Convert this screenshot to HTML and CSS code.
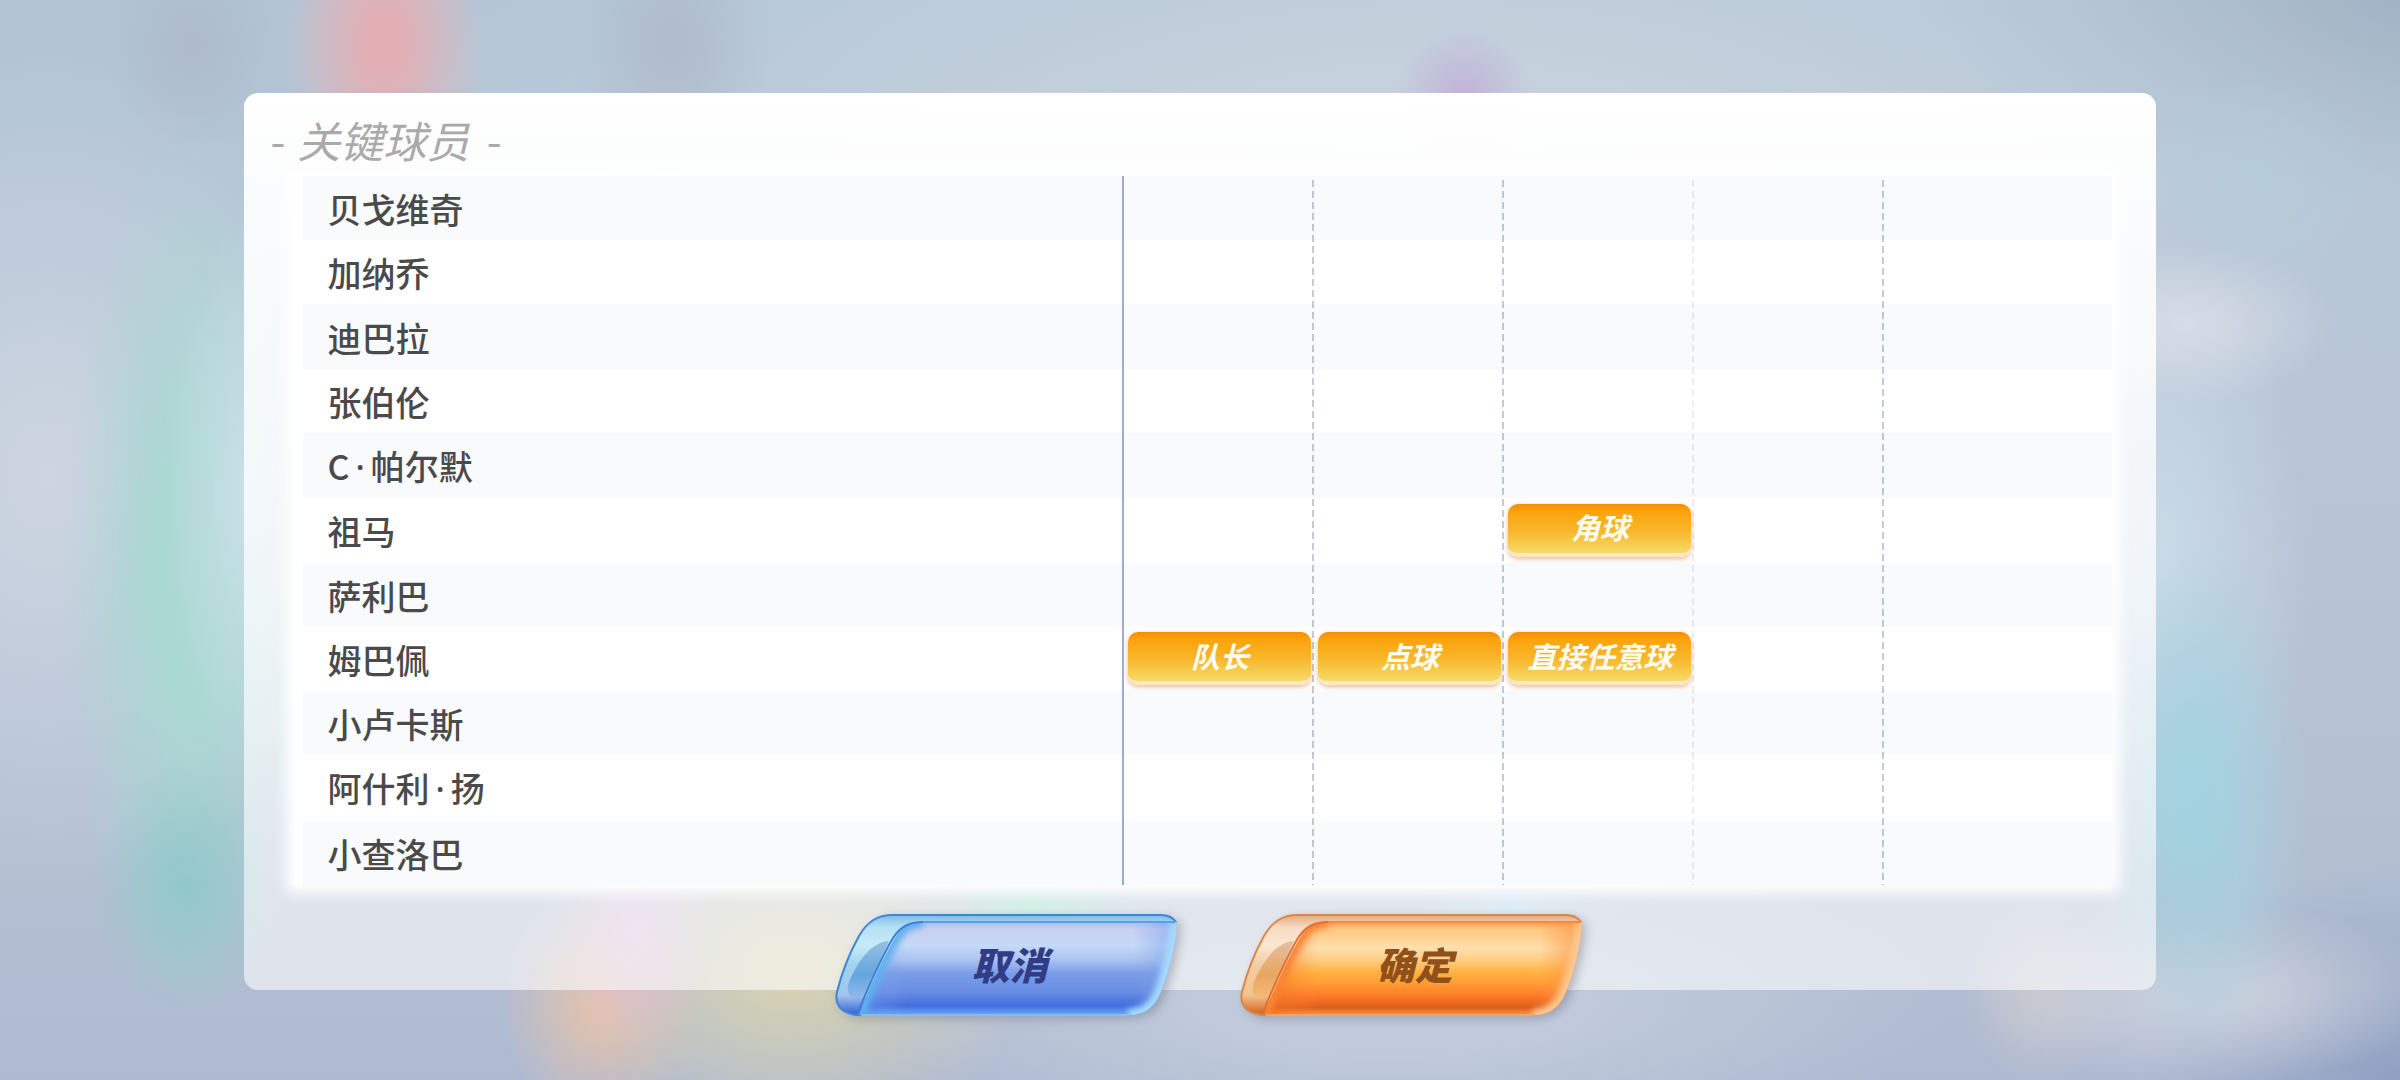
FILE: index.html
```
<!DOCTYPE html>
<html lang="zh-CN">
<head>
  <meta charset="UTF-8">
  <title>关键球员</title>
  <link rel="stylesheet" href="styles.css">
</head>
<body>
  <main class="panel">
    <h1 class="title">- <em>关键球员</em> -</h1>

    <div class="sheet">
      <table class="players">
        <colgroup>
          <col>
          <col class="role first">
          <col class="role">
          <col class="role">
          <col class="role faint">
          <col class="rest">
        </colgroup>
        <tbody>
          <tr><th scope="row">贝戈维奇</th><td></td><td></td><td></td><td></td><td></td></tr>
          <tr><th scope="row">加纳乔</th><td></td><td></td><td></td><td></td><td></td></tr>
          <tr><th scope="row">迪巴拉</th><td></td><td></td><td></td><td></td><td></td></tr>
          <tr><th scope="row">张伯伦</th><td></td><td></td><td></td><td></td><td></td></tr>
          <tr><th scope="row">C<span class="dot">·</span>帕尔默</th><td></td><td></td><td></td><td></td><td></td></tr>
          <tr><th scope="row">祖马</th><td></td><td></td><td><button class="tag">角球</button></td><td></td><td></td></tr>
          <tr><th scope="row">萨利巴</th><td></td><td></td><td></td><td></td><td></td></tr>
          <tr><th scope="row">姆巴佩</th><td><button class="tag">队长</button></td><td><button class="tag">点球</button></td><td><button class="tag">直接任意球</button></td><td></td><td></td></tr>
          <tr><th scope="row">小卢卡斯</th><td></td><td></td><td></td><td></td><td></td></tr>
          <tr><th scope="row">阿什利<span class="dot">·</span>扬</th><td></td><td></td><td></td><td></td><td></td></tr>
          <tr><th scope="row">小查洛巴</th><td></td><td></td><td></td><td></td><td></td></tr>
        </tbody>
      </table>
    </div>

    <div class="actions">
      <button class="btn cancel">
        <svg viewBox="0 0 344 104" aria-hidden="true">
          <defs>
            <linearGradient id="blueGlass" x1="0" y1="0" x2="0" y2="1">
              <stop offset="0" stop-color="#7cbcea"/>
              <stop offset=".12" stop-color="#b4e0f6"/>
              <stop offset=".3" stop-color="#c8ebf8"/>
              <stop offset=".5" stop-color="#9fd4f0"/>
              <stop offset=".8" stop-color="#a4c4ee"/>
              <stop offset="1" stop-color="#2c62d4"/>
            </linearGradient>
            <linearGradient id="blueCore" x1="0" y1="0" x2="0" y2="1">
              <stop offset="0" stop-color="#8fb4da"/>
              <stop offset=".6" stop-color="#549cdc"/>
              <stop offset="1" stop-color="#8fb8ea"/>
            </linearGradient>
            <linearGradient id="blueFace" x1="0" y1="0" x2="0" y2="1">
              <stop offset="0" stop-color="#a4c4f2"/>
              <stop offset=".08" stop-color="#cccff0"/>
              <stop offset=".25" stop-color="#c4daf7"/>
              <stop offset=".4" stop-color="#adc5f2"/>
              <stop offset=".55" stop-color="#7b9de7"/>
              <stop offset=".75" stop-color="#688de4"/>
              <stop offset=".9" stop-color="#436ddf"/>
              <stop offset="1" stop-color="#6ba6f4"/>
            </linearGradient>
            <linearGradient id="blueShine" x1="0" y1="0" x2="1" y2="0">
              <stop offset="0" stop-color="#5a8be8" stop-opacity=".6"/>
              <stop offset=".16" stop-color="#8fb2f0" stop-opacity="0"/>
              <stop offset=".86" stop-color="#7fa0ea" stop-opacity="0"/>
              <stop offset="1" stop-color="#7fa6ee" stop-opacity=".7"/>
            </linearGradient>
            <clipPath id="faceClip">
              <path d="M88 8 H342 C341 30 334 58 326 78 C320 93 310 101 294 101 H24 C32 80 48 44 60 24 C68 12 76 8 88 8 Z"/>
            </clipPath>
            <filter id="soft" x="-20%" y="-20%" width="140%" height="140%">
              <feGaussianBlur stdDeviation="3"/>
            </filter>
          </defs>
          <path d="M58 1 H326 Q336 1 341 8 L300 60 L26 101 C8 101 -1 92 2 78 C7 58 14 40 24 22 C32 8 42 1 58 1 Z" fill="url(#blueGlass)" stroke="#3d86d8" stroke-width="2"/>
          <path d="M54 27 C38 28 24 44 14 68 C9 82 20 88 28 82 Z" fill="url(#blueCore)" opacity=".8"/>
          <path d="M88 8 H342 C341 30 334 58 326 78 C320 93 310 101 294 101 H24 C32 80 48 44 60 24 C68 12 76 8 88 8 Z" fill="url(#blueFace)"/>
          <g clip-path="url(#faceClip)">
            <path d="M20 0 H344 V104 H20 Z" fill="url(#blueShine)"/>
            <path d="M341 8 C340 30 333 58 325 78 C319 93 309 101 293 101" fill="none" stroke="#a6dcff" stroke-width="12" filter="url(#soft)"/>
            <path d="M24 101 C32 80 48 44 60 24 C68 12 76 8 88 8" fill="none" stroke="#62b0f0" stroke-width="12" filter="url(#soft)"/>
          </g>
          <path d="M22 101 C30 80 46 44 58 24 C66 12 75 8 88 8" fill="none" stroke="#3a80d8" stroke-width="2"/>
          <path d="M88 8 H340" fill="none" stroke="#5f9de6" stroke-width="2"/>
          <path d="M26 101 H294" fill="none" stroke="#7fbdf8" stroke-width="2"/>
        </svg>
        <span>取消</span>
      </button>

      <button class="btn confirm">
        <svg viewBox="0 0 344 104" aria-hidden="true">
          <defs>
            <linearGradient id="orangeGlass" x1="0" y1="0" x2="0" y2="1">
              <stop offset="0" stop-color="#e8a878"/>
              <stop offset=".12" stop-color="#f6dac4"/>
              <stop offset=".3" stop-color="#fae8d0"/>
              <stop offset=".5" stop-color="#f2cca4"/>
              <stop offset=".8" stop-color="#f4c48c"/>
              <stop offset="1" stop-color="#d0601c"/>
            </linearGradient>
            <linearGradient id="orangeCore" x1="0" y1="0" x2="0" y2="1">
              <stop offset="0" stop-color="#e0b498"/>
              <stop offset=".6" stop-color="#e69e50"/>
              <stop offset="1" stop-color="#f2b878"/>
            </linearGradient>
            <linearGradient id="orangeFace" x1="0" y1="0" x2="0" y2="1">
              <stop offset="0" stop-color="#ff9c50"/>
              <stop offset=".08" stop-color="#ffc880"/>
              <stop offset=".28" stop-color="#ffdfae"/>
              <stop offset=".4" stop-color="#ffcf86"/>
              <stop offset=".55" stop-color="#ffb040"/>
              <stop offset=".66" stop-color="#ff9e34"/>
              <stop offset=".78" stop-color="#ff7e2a"/>
              <stop offset=".92" stop-color="#df5c1a"/>
              <stop offset="1" stop-color="#f29a48"/>
            </linearGradient>
            <linearGradient id="orangeShine" x1="0" y1="0" x2="1" y2="0">
              <stop offset="0" stop-color="#ee6418" stop-opacity=".8"/>
              <stop offset=".18" stop-color="#ff9040" stop-opacity="0"/>
              <stop offset=".86" stop-color="#ff9a48" stop-opacity="0"/>
              <stop offset="1" stop-color="#ff9040" stop-opacity=".8"/>
            </linearGradient>
          </defs>
          <path d="M58 1 H326 Q336 1 341 8 L300 60 L26 101 C8 101 -1 92 2 78 C7 58 14 40 24 22 C32 8 42 1 58 1 Z" fill="url(#orangeGlass)" stroke="#d98848" stroke-width="2"/>
          <path d="M54 27 C38 28 24 44 14 68 C9 82 20 88 28 82 Z" fill="url(#orangeCore)" opacity=".8"/>
          <path d="M88 8 H342 C341 30 334 58 326 78 C320 93 310 101 294 101 H24 C32 80 48 44 60 24 C68 12 76 8 88 8 Z" fill="url(#orangeFace)"/>
          <g clip-path="url(#faceClip)">
            <path d="M20 0 H344 V104 H20 Z" fill="url(#orangeShine)"/>
            <path d="M341 8 C340 30 333 58 325 78 C319 93 309 101 293 101" fill="none" stroke="#ffc890" stroke-width="12" filter="url(#soft)"/>
            <path d="M24 101 C32 80 48 44 60 24 C68 12 76 8 88 8" fill="none" stroke="#f98438" stroke-width="12" filter="url(#soft)"/>
          </g>
          <path d="M22 101 C30 80 46 44 58 24 C66 12 75 8 88 8" fill="none" stroke="#e07030" stroke-width="2"/>
          <path d="M88 8 H340" fill="none" stroke="#f58a40" stroke-width="2"/>
          <path d="M26 101 H294" fill="none" stroke="#f5a558" stroke-width="2"/>
        </svg>
        <span>确定</span>
      </button>
    </div>
  </main>
</body>
</html>
```

FILE: styles.css
```
* { box-sizing: border-box; }

body {
  margin: 0;
  min-height: 100vh;
  display: flow-root;
  font-family: "Noto Sans CJK SC", sans-serif;
  color: #4a4a4a;
  background:
    radial-gradient(ellipse 100px 150px at 16% 4%, rgba(228, 174, 178, .95) 20%, rgba(228, 178, 182, .5) 60%, rgba(228, 184, 188, 0) 100%),
    radial-gradient(ellipse 100px 140px at 28% 4%, rgba(172, 184, 198, .8), rgba(172, 184, 198, 0)),
    radial-gradient(ellipse 90px 110px at 8% 4%, rgba(172, 184, 198, .8), rgba(172, 184, 198, 0)),
    radial-gradient(ellipse 70px 70px at 61% 9%, rgba(190, 170, 214, .8), rgba(190, 170, 214, 0)),
    radial-gradient(ellipse 90px 280px at 10.5% 46%, rgba(206, 226, 234, .9), rgba(206, 226, 234, 0)),
    radial-gradient(ellipse 90px 130px at 7.7% 82%, rgba(142, 200, 200, .9), rgba(142, 200, 200, 0)),
    radial-gradient(ellipse 130px 440px at 8.2% 53%, rgba(168, 216, 210, .95) 30%, rgba(168, 216, 210, 0)),
    radial-gradient(ellipse 150px 80px at 91% 30%, rgba(218, 222, 232, .9), rgba(218, 222, 232, 0)),
    radial-gradient(ellipse 110px 260px at 91.5% 74%, rgba(164, 210, 224, .95) 20%, rgba(164, 210, 224, 0)),
    radial-gradient(ellipse 150px 320px at 90% 52%, rgba(204, 222, 234, .9), rgba(204, 222, 234, 0)),
    radial-gradient(ellipse 110px 100px at 94% 16%, rgba(180, 204, 216, .8), rgba(180, 204, 216, 0)),
    radial-gradient(ellipse 240px 90px at 92% 92%, rgba(204, 208, 220, .9) 20%, rgba(204, 208, 220, 0)),
    radial-gradient(ellipse 80px 90px at 85% 92%, rgba(214, 206, 200, .6), rgba(214, 206, 200, 0)),
    radial-gradient(ellipse 80px 120px at 26.5% 86%, rgba(224, 190, 232, .7), rgba(224, 190, 232, 0)),
    radial-gradient(ellipse 100px 120px at 25% 93%, rgba(226, 194, 172, .95) 10%, rgba(226, 194, 172, 0)),
    radial-gradient(ellipse 240px 170px at 33% 90%, rgba(214, 210, 176, .95) 10%, rgba(214, 210, 176, 0)),
    radial-gradient(ellipse 110px 80px at 43% 84%, rgba(140, 226, 190, .8), rgba(140, 226, 190, 0)),
    radial-gradient(ellipse 90px 60px at 63% 84%, rgba(170, 215, 240, .7), rgba(170, 215, 240, 0)),
    radial-gradient(ellipse 560px 150px at 58% 93%, rgba(194, 204, 220, .9) 30%, rgba(194, 204, 220, 0)),
    radial-gradient(ellipse 320px 420px at 2% 44%, rgba(206, 214, 226, .95), rgba(206, 214, 226, 0)),
    radial-gradient(ellipse 1100px 420px at 60% 16%, rgba(204, 214, 224, .95), rgba(204, 214, 224, 0)),
    radial-gradient(ellipse 260px 220px at 100% 100%, rgba(136, 154, 190, .8), rgba(136, 154, 190, 0)),
    radial-gradient(ellipse 500px 200px at 100% 0, rgba(156, 172, 192, .8), rgba(156, 172, 192, 0)),
    linear-gradient(#b2c5d5, #b8c4d5 50%, #b2bfd2 85%, #afbad2);
}

/* dialog */
.panel {
  display: flow-root;
  width: 79.7%;
  margin: 93px auto 90px;
  border-radius: 14px;
  background: linear-gradient(#fff, rgba(255, 255, 255, .92) 15%, rgba(255, 255, 255, .76) 50%, rgba(255, 255, 255, .58) 90%);
}

.title {
  margin: 0;
  padding: 14px 0 5px 27px;
  font-size: 43px;
  line-height: 64px;
  font-weight: 400;
  color: #aaa;
}

.title em { margin: 0 8px 0 2px; }

/* white sheet fading into the panel */
.sheet {
  margin: 0 44px 0 50px;
  padding-left: 9px;
  background: #fff;
  box-shadow: 0 0 14px 8px #fff;
}

.players {
  width: 100%;
  height: 709px;
  table-layout: fixed;
  border-collapse: collapse;
}

.players tr:nth-child(odd) { background: rgba(60, 80, 150, .03); }

.players th,
.players td { padding: 0; }

.players th {
  padding: 2px 0 0 25px;
  text-align: left;
  font-size: 34px;
  line-height: 54px;
  font-weight: 500;
}

.dot {
  padding: 0 6px;
  font-family: "Noto Sans", sans-serif;
}

/* vertical rules between the role columns */
.role { width: 190px; }
.rest { width: 230px; }

.role,
.rest {
  background: repeating-linear-gradient(transparent 0 4px, #c5cad6 4px 11px) 0 0 / 2px 100% no-repeat;
}

.first { background: linear-gradient(#9dafce, #9dafce) 0 0 / 2px 100% no-repeat; }
.faint { background-image: repeating-linear-gradient(transparent 0 4px, #ecedf2 4px 11px); }

.tag {
  display: block;
  width: 183px;
  height: 53px;
  margin: 0 0 0 6px;
  padding: 0 0 4px;
  border: 0;
  border-bottom: 4px solid #fbe8bf;
  border-radius: 10px;
  background: linear-gradient(#f58d02, #fba30c 16%, #f8b72b 55%, #f6dc68);
  box-shadow: 0 2px 5px rgba(200, 120, 60, .5);
  color: #fffdf0;
  font: italic bold 29px/44px "Noto Sans CJK SC", sans-serif;
}

.actions {
  display: flex;
  justify-content: center;
  gap: 61px;
  padding: 29px 0 0 20px;
  margin-bottom: -28px;
}

.btn {
  display: grid;
  place-items: center;
  width: 344px;
  height: 104px;
  padding: 0;
  border: 0;
  background: none;
  font: italic 900 38px/56px "Noto Sans CJK SC", sans-serif;
  cursor: pointer;
}

.btn svg,
.btn span { grid-area: 1 / 1; }

.btn svg {
  width: 344px;
  height: 104px;
  filter: drop-shadow(4px 3px 5px rgba(90, 90, 110, .35));
}

.btn span {
  z-index: 1;
  padding: 0 0 4px 4px;
}

.cancel { color: #323c86; }
.confirm { color: #8f501c; }
```
